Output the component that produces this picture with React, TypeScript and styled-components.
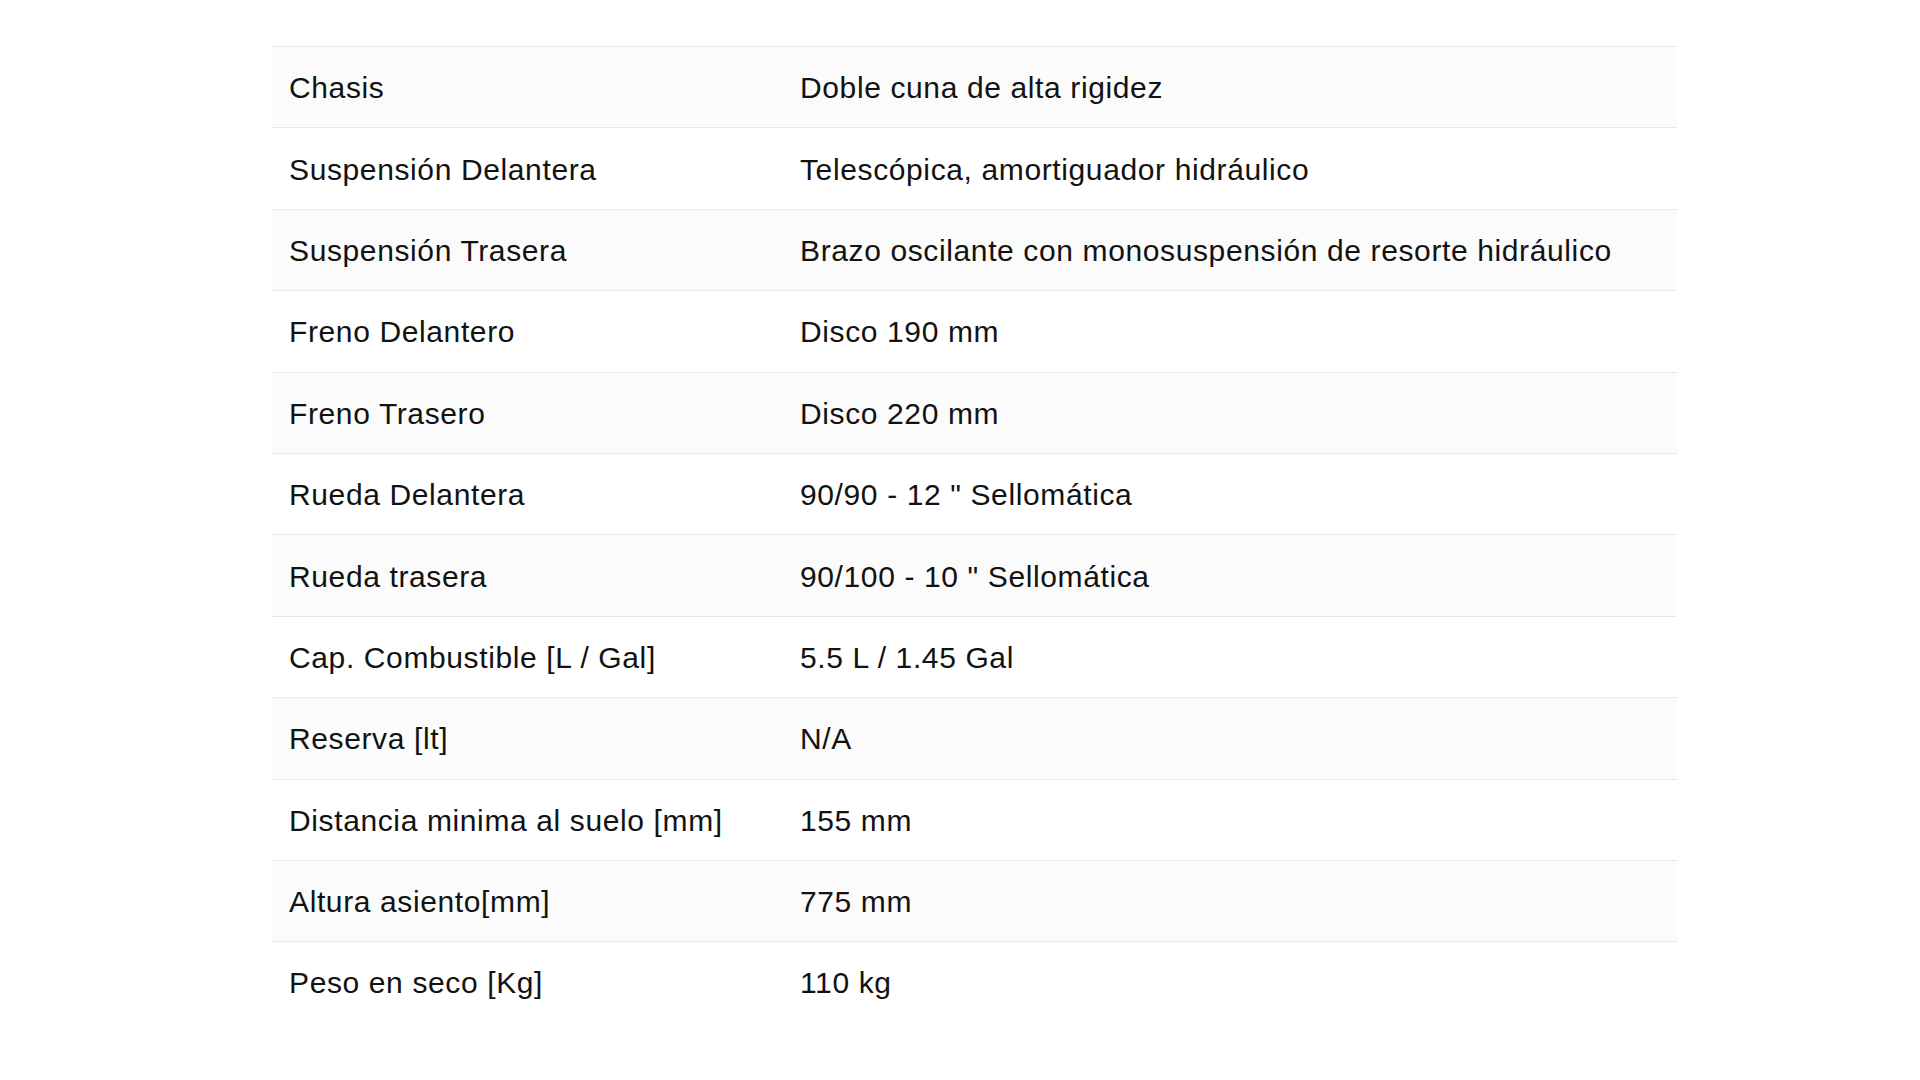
import React from "react";
import styled, { createGlobalStyle } from "styled-components";

const GlobalStyle = createGlobalStyle`
  html, body {
    margin: 0;
    padding: 0;
    background: #ffffff;
  }
  body {
    font-family: "Liberation Sans", Arial, sans-serif;
    color: #111111;
  }
`;

const Page = styled.div`
  display: flex;
  justify-content: flex-start;
  padding: 46px 0 0 272px;
  width: 1920px;
  height: 1080px;
  box-sizing: border-box;
`;

const Table = styled.div`
  width: 1405px;
  display: flex;
  flex-direction: column;
`;

const Row = styled.div<{ $shaded: boolean }>`
  display: grid;
  grid-template-columns: 511px 1fr;
  align-items: center;
  height: 81.4px;
  box-sizing: border-box;
  border-top: 1.5px solid #e8e8e8;
  background: ${(p) => (p.$shaded ? "#fbfbfb" : "#ffffff")};
`;

const Cell = styled.div`
  padding: 2px 17px 0;
  font-size: 30px;
  letter-spacing: 0.62px;
  line-height: 1;
  color: #121212;
  white-space: nowrap;
`;

const specs: [string, string][] = [
  ["Chasis", "Doble cuna de alta rigidez"],
  ["Suspensión Delantera", "Telescópica, amortiguador hidráulico"],
  ["Suspensión Trasera", "Brazo oscilante con monosuspensión de resorte hidráulico"],
  ["Freno Delantero", "Disco 190 mm"],
  ["Freno Trasero", "Disco 220 mm"],
  ["Rueda Delantera", '90/90 - 12 " Sellomática'],
  ["Rueda trasera", '90/100 - 10 " Sellomática'],
  ["Cap. Combustible [L / Gal]", "5.5 L / 1.45 Gal"],
  ["Reserva [lt]", "N/A"],
  ["Distancia minima al suelo [mm]", "155 mm"],
  ["Altura asiento[mm]", "775 mm"],
  ["Peso en seco [Kg]", "110 kg"],
];

export default function App() {
  return (
    <>
      <GlobalStyle />
      <Page>
        <Table>
          {specs.map(([label, value], i) => (
            <Row key={label} $shaded={i % 2 === 0}>
              <Cell>{label}</Cell>
              <Cell>{value}</Cell>
            </Row>
          ))}
        </Table>
      </Page>
    </>
  );
}
